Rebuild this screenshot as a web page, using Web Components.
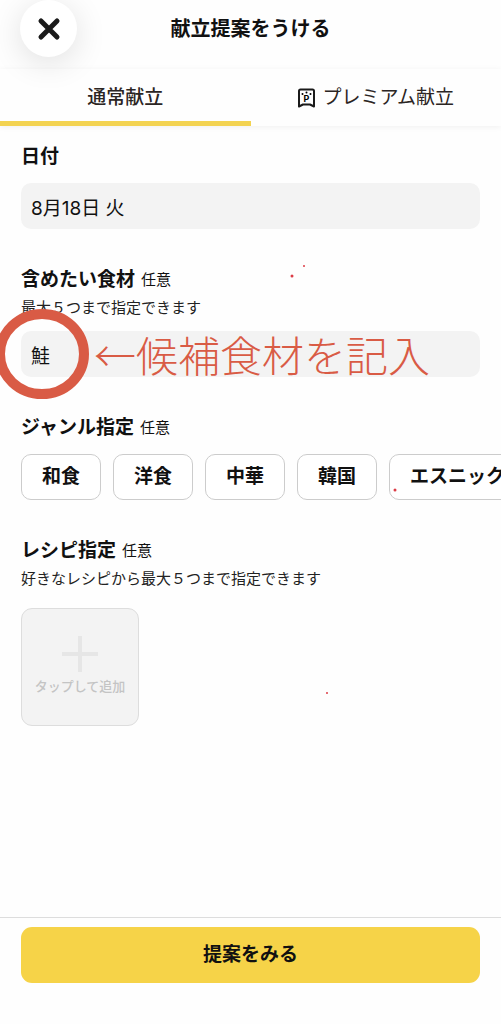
<!DOCTYPE html>
<html lang="ja">
<head>
<meta charset="utf-8">
<meta name="viewport" content="width=device-width, initial-scale=1">
<title>献立提案をうける</title>
<style>
  body {
    margin: 0;
    background: #fefefe;
    color: #111;
    font-family: Inter, "Noto Sans CJK JP", sans-serif;
    font-size: 19px;
    line-height: 24px;
  }
</style>
</head>
<body>
<menu-screen>
  <screen-header slot="header">献立提案をうける</screen-header>
  <plan-tabs slot="tabs"></plan-tabs>

  <text-field heading="日付" value="8月18日 火"></text-field>
  <text-field heading="含めたい食材" optional="任意" help="最大５つまで指定できます" value="鮭">
    <hand-note>←候補食材を記入</hand-note>
  </text-field>
  <form-section heading="ジャンル指定" optional="任意">
    <chip-list items="和食,洋食,中華,韓国,エスニック"></chip-list>
  </form-section>
  <form-section heading="レシピ指定" optional="任意" help="好きなレシピから最大５つまで指定できます">
    <add-tile>タップして追加</add-tile>
  </form-section>
  <pen-dots></pen-dots>

  <submit-bar slot="footer">提案をみる</submit-bar>
</menu-screen>

<script>
// Attach an open shadow root filled from a markup string
function render(el, html) {
  const template = document.createElement('template');
  template.innerHTML = html;
  el.attachShadow({ mode: 'open' });
  el.shadowRoot.appendChild(template.content.cloneNode(true));
}

// Heading styles shared by every section of the form
const headingStyles = `
  .heading {
    display: flex;
    align-items: center;
    gap: 6px;
    font-weight: bold;
  }
  .optional {
    font-size: 15px;
    font-weight: normal;
  }
  .help {
    margin: 4px 0 0;
    font-size: 15px;
    color: #222;
  }
`;

function headingParts(el) {
  const optional = el.getAttribute('optional');
  return `${el.getAttribute('heading')}${optional ? `<span class="optional">${optional}</span>` : ''}`;
}

function helpPart(el) {
  const help = el.getAttribute('help');
  return help ? `<p class="help" id="help">${help}</p>` : '';
}

class MenuScreen extends HTMLElement {
  constructor() {
    super();
    render(this, `
      <style>
        :host {
          display: flex;
          flex-direction: column;
          min-height: 100vh;
          overflow: hidden;
        }
        main {
          flex: 1;
          position: relative;
          display: flex;
          flex-direction: column;
          gap: 39px;
          padding: 19px 21px 40px;
        }
      </style>
      <slot name="header"></slot>
      <slot name="tabs"></slot>
      <main><slot></slot></main>
      <slot name="footer"></slot>
    `);
  }
}

class ScreenHeader extends HTMLElement {
  constructor() {
    super();
    render(this, `
      <style>
        :host {
          display: grid;
          grid-template-columns: 57px 1fr 57px;
          align-items: center;
          padding: 0 20px 12px;
        }
        button {
          display: flex;
          align-items: center;
          justify-content: center;
          height: 57px;
          padding: 0;
          border: 0;
          border-radius: 50%;
          background: #fff;
          box-shadow: 0 6px 32px rgba(0, 0, 0, .12);
        }
        h1 {
          margin: 0;
          font-size: 20px;
          font-weight: bold;
          text-align: center;
        }
      </style>
      <button type="button" aria-label="閉じる">
        <svg width="24" height="24" viewBox="0 0 24 24" fill="none" stroke="#1a1a1a" stroke-width="5" stroke-linecap="round">
          <path d="M4 4 20 20M20 4 4 20"/>
        </svg>
      </button>
      <h1><slot></slot></h1>
    `);
  }
}

class PlanTabs extends HTMLElement {
  constructor() {
    super();
    render(this, `
      <style>
        :host {
          display: block;
          position: relative;
          box-shadow: 0 1px 6px rgba(0, 0, 0, .06);
        }
        nav {
          display: grid;
          grid-template-columns: 1fr 1fr;
        }
        button {
          display: flex;
          align-items: center;
          justify-content: center;
          gap: 6px;
          height: 57px;
          padding: 5px 0 0;
          border: 0;
          border-bottom: 5px solid transparent;
          background: none;
          color: #2b2523;
          font: inherit;
        }
        button[aria-selected="true"] {
          border-color: #f3d351;
          font-weight: 500;
        }
        text {
          font: bold 9px Inter, sans-serif;
        }
      </style>
      <nav role="tablist">
        <button type="button" role="tab" aria-selected="true">通常献立</button>
        <button type="button" role="tab" aria-selected="false">
          <svg width="19" height="20" viewBox="0 0 19 20">
            <path d="M3.5 1.5h12q1.500 0 1.500 1.500v15.500l-4-2h-7l-4 2V3q0-1.500 1.500-1.500z" fill="none" stroke="#1a1a1a" stroke-width="2" stroke-linejoin="round"/>
            <circle cx="5.500" cy="6" r="1"/>
            <circle cx="9.500" cy="4.500" r="1"/>
            <circle cx="13.500" cy="6" r="1"/>
            <text x="9.500" y="14" text-anchor="middle">P</text>
          </svg>
          プレミアム献立
        </button>
      </nav>
    `);
  }
}

class TextField extends HTMLElement {
  constructor() {
    super();
    render(this, `
      <style>
        :host { display: block; }
        ${headingStyles}
        .box {
          position: relative;
          margin-top: 14px;
        }
        .help + .box { margin-top: 11px; }
        input {
          display: block;
          box-sizing: border-box;
          width: 100%;
          height: 46px;
          padding: 0 10px;
          border: 0;
          border-radius: 10px;
          background: #f3f3f3;
          color: #111;
          font: inherit;
        }
      </style>
      <label class="heading" for="field">${headingParts(this)}</label>
      ${helpPart(this)}
      <div class="box">
        <input id="field" type="text" value="${this.getAttribute('value') || ''}">
        <slot></slot>
      </div>
    `);
  }
}

class FormSection extends HTMLElement {
  constructor() {
    super();
    render(this, `
      <style>
        :host { display: block; }
        ${headingStyles}
        h2 {
          margin: 0;
          font-size: inherit;
        }
        .content { margin-top: 14px; }
        .help + .content { margin-top: 17px; }
      </style>
      <h2 class="heading">${headingParts(this)}</h2>
      ${helpPart(this)}
      <div class="content"><slot></slot></div>
    `);
  }
}

class ChipList extends HTMLElement {
  constructor() {
    super();
    const chips = this.getAttribute('items').split(',')
      .map((name) => `<button type="button">${name}</button>`)
      .join('');
    render(this, `
      <style>
        :host {
          display: flex;
          gap: 12px;
          margin-right: -21px;
          overflow: hidden;
        }
        button {
          flex: none;
          height: 46px;
          padding: 0 20px;
          border: 1px solid #ccc;
          border-radius: 10px;
          background: #fff;
          color: #111;
          font: inherit;
          font-weight: bold;
        }
      </style>
      ${chips}
    `);
  }
}

class AddTile extends HTMLElement {
  constructor() {
    super();
    render(this, `
      <style>
        :host { display: block; }
        button {
          display: flex;
          flex-direction: column;
          align-items: center;
          justify-content: center;
          gap: 2px;
          width: 118px;
          height: 118px;
          padding: 0;
          border: 1px solid #ddd;
          border-radius: 11px;
          background: #f3f3f3;
          color: #c4c4c4;
          font: inherit;
          font-size: 13px;
          font-weight: 500;
        }
      </style>
      <button type="button">
        <svg width="36" height="36" viewBox="0 0 36 36" stroke="#e6e6e6" stroke-width="4">
          <path d="M18 0v36M0 18h36"/>
        </svg>
        <slot></slot>
      </button>
    `);
  }
}

// Red ring round the input's value, with a remark beside it
class HandNote extends HTMLElement {
  constructor() {
    super();
    render(this, `
      <style>
        :host {
          position: absolute;
          top: -22px;
          left: -26px;
          display: flex;
          align-items: center;
          gap: 5px;
          color: #d95b45;
          font-size: 42px;
          font-weight: 300;
          line-height: 48px;
          white-space: nowrap;
          pointer-events: none;
        }
        span { font-family: "Noto Sans CJK JP", sans-serif; }
      </style>
      <svg width="94" height="90" viewBox="0 0 94 90" fill="none" stroke="currentColor" stroke-width="10">
        <ellipse cx="47" cy="45" rx="42" ry="40"/>
      </svg>
      <span><slot></slot></span>
    `);
  }
}

// Stray pen marks lying over the form
class PenDots extends HTMLElement {
  constructor() {
    super();
    render(this, `
      <style>
        :host {
          position: absolute;
          top: 0;
          left: 0;
          pointer-events: none;
        }
        svg { display: block; }
      </style>
      <svg width="420" height="600" fill="#dc3c46">
        <circle cx="292" cy="150" r="1.500"/>
        <circle cx="304" cy="140" r="1"/>
        <circle cx="395" cy="364" r="1.500"/>
        <circle cx="327" cy="567" r="1"/>
      </svg>
    `);
  }
}

class SubmitBar extends HTMLElement {
  constructor() {
    super();
    render(this, `
      <style>
        :host {
          display: block;
          padding: 9px 21px 41px;
          border-top: 1px solid #ddd;
        }
        button {
          display: block;
          width: 100%;
          height: 56px;
          padding: 0;
          border: 0;
          border-radius: 11px;
          background: #f6d348;
          color: #111;
          font: inherit;
          font-weight: bold;
        }
      </style>
      <button type="submit"><slot></slot></button>
    `);
  }
}

window.customElements.define('menu-screen', MenuScreen);
window.customElements.define('screen-header', ScreenHeader);
window.customElements.define('plan-tabs', PlanTabs);
window.customElements.define('text-field', TextField);
window.customElements.define('form-section', FormSection);
window.customElements.define('chip-list', ChipList);
window.customElements.define('add-tile', AddTile);
window.customElements.define('hand-note', HandNote);
window.customElements.define('pen-dots', PenDots);
window.customElements.define('submit-bar', SubmitBar);
</script>
</body>
</html>
